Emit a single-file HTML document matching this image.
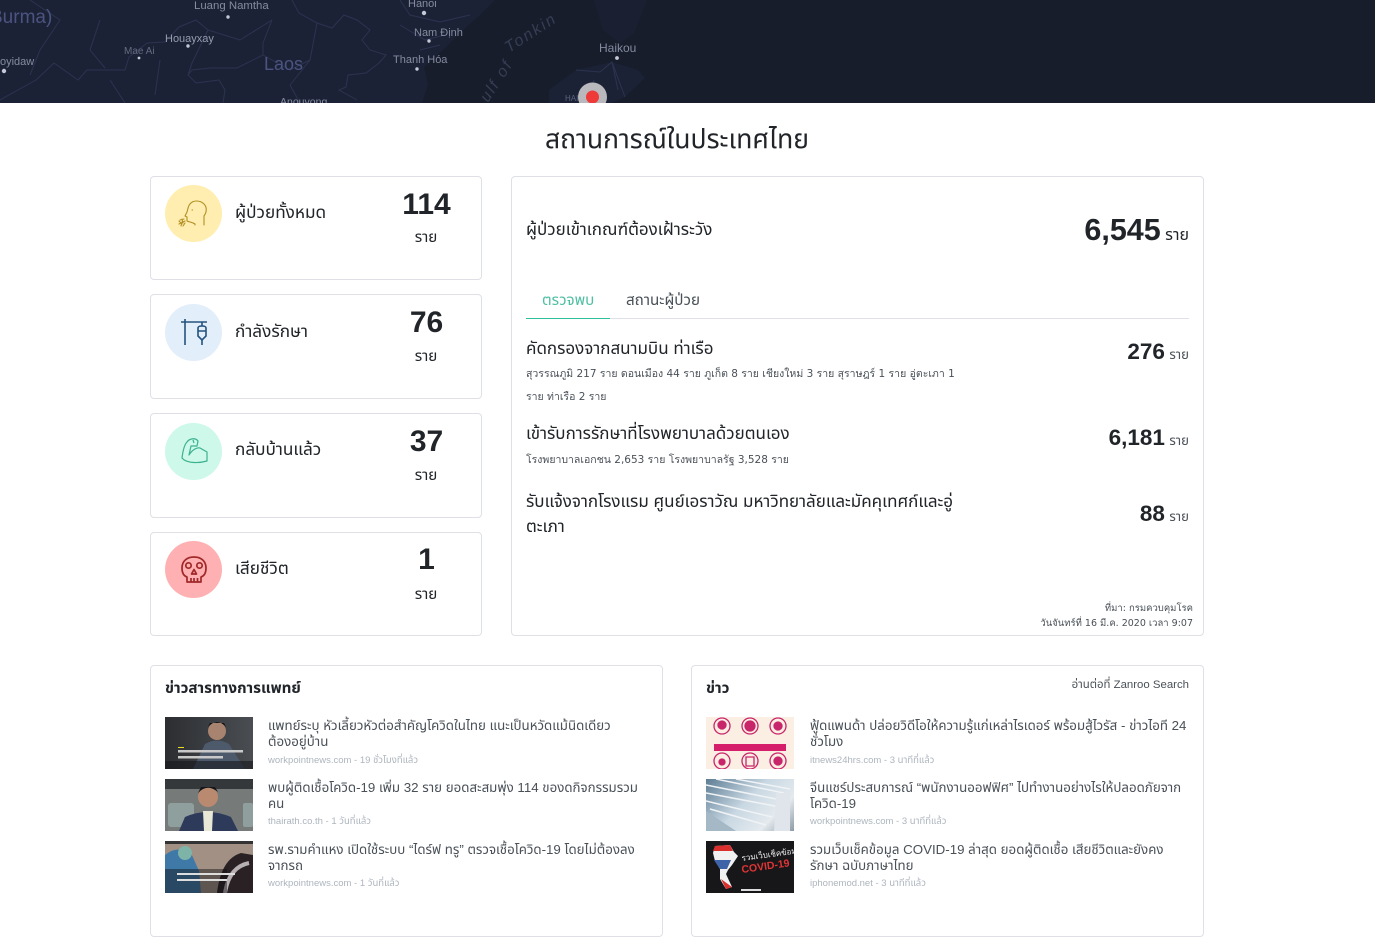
<!DOCTYPE html>
<html lang="th"><head><meta charset="utf-8"><title>สถานการณ์ในประเทศไทย</title>
<style>
*{box-sizing:border-box}
html,body{margin:0;padding:0;background:#fff}
body{width:1375px;height:945px;overflow:hidden;position:relative;font-family:"Liberation Sans","Noto Sans Thai","Noto Sans Thai UI","Kanit","Prompt","Sarabun",sans-serif;color:#212529}
.a{position:absolute;white-space:nowrap}
.card{position:absolute;border:1px solid #dfe0e5;border-radius:4px;background:#fff}
.circ{position:absolute;left:165px;width:57px;height:57px;border-radius:50%}
.lbl{font-size:17.200px;line-height:24px;color:#212529}
.num{font-weight:700;font-size:30px;line-height:36px;text-align:center;width:100px;left:376.500px;color:#212529}
.ray{font-size:15.200px;line-height:20px;text-align:center;width:100px;left:376px;color:#212529}
.hd{font-size:17px;line-height:24px;color:#212529}
.sm{font-family:"DejaVu Sans",sans-serif;font-size:10.500px;line-height:23px;color:#495057}
.big{font-weight:700;font-size:22.500px;line-height:28px;color:#212529}
.u{font-size:13.200px;line-height:14px;color:#495057}
.nt{font-size:13.300px;line-height:16px;color:#495057;white-space:nowrap}
.ns{font-size:9.500px;line-height:14px;color:#adb5bd}
.th{position:absolute;width:88px;height:52px;overflow:hidden}
.th svg{filter:blur(.35px);display:block}
</style></head><body>

<svg class="a" style="left:0;top:0" width="1375" height="103" viewBox="0 0 1375 103">
<rect width="1375" height="103" fill="#171d2b"/>
<path d="M0 0H495L480 15 460 33 445 48 424 67 428 85 422 103H0Z" fill="#1c2236"/>
<path d="M549 103V90L576 70 612 62 638 70 645 78 625 97 612 103Z" fill="#1c2236"/>
<path d="M594 0 603 30 620 43 634 33 647 0Z" fill="#1a2032"/>
<g fill="none" stroke="#2b3350" stroke-width="1">
<path d="M292 0 299 13 317 23 332 28 344 15 357 20 370 30 362 40 370 50 386 55 379 63 366 73 348 75 346 87 339 90 357 100"/>
<path d="M272 20 263 43 263 55 237 68 210 68 192 70 188 75 196 83 219 80 225 90 223 103"/>
<path d="M179 27 196 20 208 30 192 63 188 75"/>
<path d="M0 100 36 80 54 63 78 80 87 70 125 70 129 57 147 43 165 42 179 27"/>
<path d="M208 30 240 40 272 20M317 23 310 60 290 85 300 103M263 55 290 70 310 60"/>
<path d="M30 0 60 20 40 50 30 75M100 20 90 50 105 68M110 80 125 103M160 60 155 95"/>
<path d="M400 0 410 15 440 22 470 15M400 25 425 40 445 35M420 50 440 45"/>
<path d="M576 70 600 72 612 62 625 97M612 62 618 90M594 80 585 103"/>
</g>
<g font-family="Liberation Sans,sans-serif" font-size="11" fill="#858ba0">
<text x="194" y="9" font-size="11.400">Luang Namtha</text>
<text x="165" y="42" fill="#979db0">Houayxay</text>
<text x="124" y="54" font-size="10" fill="#646a80">Mae Ai</text>
<text x="0" y="65" font-size="11">oyidaw</text>
<text x="414" y="36">Nam Định</text>
<text x="393" y="63">Thanh Hóa</text>
<text x="408" y="7">Hanoi</text>
<text x="599" y="52" font-size="12">Haikou</text>
<text x="280" y="105" font-size="10.500">Anouvong</text>
<text x="264" y="70" font-size="18" fill="#4b5480">Laos</text>
<text x="-10" y="23" font-size="19" fill="#4b5480">Burma)</text>
<text x="565" y="101" font-size="8" fill="#5a617c">HAI</text>
<text transform="translate(488 103) rotate(-57)" font-size="16" letter-spacing="2" fill="#363d54" font-style="italic">ulf of</text>
<text transform="translate(509 53) rotate(-33)" font-size="16" letter-spacing="2" fill="#363d54" font-style="italic">Tonkin</text>
</g>
<g fill="#c5c9d6"><circle cx="139" cy="58" r="1.400"/><circle cx="188" cy="46" r="1.700"/><circle cx="228" cy="17" r="1.700"/><circle cx="424" cy="13" r="2.200"/><circle cx="429" cy="41" r="1.700"/><circle cx="417" cy="69" r="1.700"/><circle cx="617" cy="58" r="1.900"/><circle cx="4" cy="71" r="2.200"/></g>
<circle cx="592.500" cy="97" r="14.500" fill="#b9b9bd"/>
<circle cx="592.500" cy="97" r="6.500" fill="#ef3a3a"/>
</svg>

<div class="a" style="left:0;width:1354px;top:121px;text-align:center;font-size:26.500px;line-height:36px;color:#212529">สถานการณ์ในประเทศไทย</div>

<div class="card" style="left:150px;top:176px;width:332px;height:104px"></div>
<div class="card" style="left:150px;top:294px;width:332px;height:105px"></div>
<div class="card" style="left:150px;top:413px;width:332px;height:105px"></div>
<div class="card" style="left:150px;top:532px;width:332px;height:104px"></div>

<div class="circ" style="top:185px;background:#ffeeb0"></div>
<div class="circ" style="top:304px;background:#e3eefb"></div>
<div class="circ" style="top:423px;background:#cdf8ea"></div>
<div class="circ" style="top:541px;background:#ffb0b2"></div>

<svg class="a" style="left:178px;top:199px" width="30" height="30" viewBox="0 0 30 30" fill="none" stroke="#b38f24" stroke-width="1.100" stroke-linecap="round" stroke-linejoin="round">
<path d="M26 26V17C29 13 29 8 26 5 22 1 15 1 12 5 10 7 10 10 9 13L7 17 9 18V22C11 23 14 23 17 25V26"/><path d="M14 11h.6"/><path d="M6 20 2 21M7 22 1 25M4 23 3 27M7 24 5 27M1 22l3 3M4 20l1 4"/>
</svg>
<svg class="a" style="left:179px;top:317px" width="30" height="30" viewBox="0 0 30 30" fill="none" stroke="#24537f" stroke-width="1.600">
<path d="M2 5H28M6 2V28M23 5V9"/><path d="M19 11Q19 9 23 9T27 11V19L23 23 19 19Z M19 14H27"/><path d="M23 23V28"/>
</svg>
<svg class="a" style="left:180px;top:437px" width="29" height="29" viewBox="0 0 29 29" fill="none" stroke="#3bb18e" stroke-width="1.200" stroke-linejoin="round">
<path d="M2 21C3 13 5 7 7 5 9 2 15 0 18 4L17 9H11L9 18C12 13 17 10 20 11L27 15V24C20 26 7 27 2 21Z"/><path d="M13 3 14 6"/>
</svg>
<svg class="a" style="left:180px;top:555px" width="28" height="29" viewBox="0 0 28 29" fill="none" stroke="#a02828" stroke-width="1.700" stroke-linejoin="round">
<path d="M7 27V22C4 21 2 18 2 13 2 6 7 2 14 2S26 6 26 13C26 18 24 21 21 22V27Z"/><circle cx="8.500" cy="10.500" r="2.700"/><circle cx="19.500" cy="10.500" r="2.700"/><path d="M14 14.500 16.500 19H11.500Z"/><path d="M11 23V27M14 23V27M17.500 23V27"/>
</svg>

<div class="a lbl" style="left:235px;top:200px">ผู้ป่วยทั้งหมด</div>
<div class="a lbl" style="left:235px;top:319px">กำลังรักษา</div>
<div class="a lbl" style="left:235px;top:437px">กลับบ้านแล้ว</div>
<div class="a lbl" style="left:235px;top:556px">เสียชีวิต</div>

<div class="a num" style="top:187px">114</div><div class="a ray" style="top:228px">ราย</div>
<div class="a num" style="top:305px">76</div><div class="a ray" style="top:347px">ราย</div>
<div class="a num" style="top:424px">37</div><div class="a ray" style="top:466px">ราย</div>
<div class="a num" style="top:542px">1</div><div class="a ray" style="top:585px">ราย</div>

<div class="card" style="left:511px;top:176px;width:693px;height:460px"></div>
<div class="a hd" style="left:526px;top:218px">ผู้ป่วยเข้าเกณฑ์ต้องเฝ้าระวัง</div>
<div class="a" style="right:186px;top:212px;font-size:16px;line-height:36px;color:#212529"><span style="font-weight:700;font-size:30.500px">6,545</span> ราย</div>

<div class="a" style="left:526px;top:318px;width:663px;height:1px;background:#dfe0e8"></div>
<div class="a" style="left:526px;top:318px;width:84px;height:1px;background:#2ebf9b"></div>
<div class="a" style="left:542px;top:291px;font-size:15.200px;line-height:20px;color:#4fbfa3">ตรวจพบ</div>
<div class="a" style="left:626px;top:291px;font-size:15.200px;line-height:20px;color:#495057">สถานะผู้ป่วย</div>

<div class="a hd" style="left:526px;top:337px">คัดกรองจากสนามบิน ท่าเรือ</div>
<div class="a sm" style="left:526px;top:363px">สุวรรณภูมิ 217 ราย ดอนเมือง 44 ราย ภูเก็ต 8 ราย เชียงใหม่ 3 ราย สุราษฎร์ 1 ราย อู่ตะเภา 1</div>
<div class="a sm" style="left:526px;top:386px">ราย ท่าเรือ 2 ราย</div>
<div class="a" style="right:186px;top:338px;line-height:28px"><span class="big">276</span> <span class="u">ราย</span></div>

<div class="a hd" style="left:526px;top:422px">เข้ารับการรักษาที่โรงพยาบาลด้วยตนเอง</div>
<div class="a sm" style="left:526px;top:449px">โรงพยาบาลเอกชน 2,653 ราย โรงพยาบาลรัฐ 3,528 ราย</div>
<div class="a" style="right:186px;top:424px;line-height:28px"><span class="big">6,181</span> <span class="u">ราย</span></div>

<div class="a hd" style="left:526px;top:490px">รับแจ้งจากโรงแรม ศูนย์เอราวัณ มหาวิทยาลัยและมัคคุเทศก์และอู่</div>
<div class="a hd" style="left:526px;top:515px">ตะเภา</div>
<div class="a" style="right:186px;top:500px;line-height:28px"><span class="big">88</span> <span class="u">ราย</span></div>

<div class="a" style="right:182px;top:601px;font-family:'DejaVu Sans',sans-serif;font-size:9.500px;line-height:15px;color:#495057">ที่มา: กรมควบคุมโรค</div>
<div class="a" style="right:182px;top:616px;font-family:'DejaVu Sans',sans-serif;font-size:9.500px;line-height:16px;color:#495057">วันจันทร์ที่ 16 มี.ค. 2020 เวลา 9:07</div>

<div class="card" style="left:150px;top:665px;width:513px;height:272px"></div>
<div class="card" style="left:691px;top:665px;width:513px;height:272px"></div>
<div class="a" style="left:165px;top:679px;font-size:15.200px;line-height:20px;font-weight:700">ข่าวสารทางการแพทย์</div>
<div class="a" style="left:706px;top:679px;font-size:15.200px;line-height:20px;font-weight:700">ข่าว</div>
<div class="a" style="right:186px;top:678px;font-size:11.400px;line-height:14px;color:#495057">อ่านต่อที่ Zanroo Search</div>

<!-- left thumbs -->
<div class="th" style="left:165px;top:717px;background:linear-gradient(90deg,#2b2d31,#3e4145 60%,#4a4d51)">
<svg width="88" height="52"><circle cx="52" cy="14" r="9" fill="#a88470"/><path d="M43 10Q52 0 61 10L59 6 45 6Z" fill="#111"/><path d="M28 52 40 27Q52 20 64 27L80 52Z" fill="#4d5a6c"/><rect x="0" y="44" width="88" height="8" fill="#17181b" opacity=".6"/><rect x="13" y="33" width="65" height="2.500" fill="#c9c9c9"/><rect x="13" y="39" width="45" height="2.500" fill="#c9c9c9"/><rect x="13" y="30" width="6" height="1" fill="#e8e020"/></svg></div>
<div class="th" style="left:165px;top:779px;background:#767a78">
<svg width="88" height="52"><rect width="88" height="10" fill="#35383a"/><rect x="3" y="24" width="26" height="24" rx="3" fill="#8e9f9e"/><rect x="78" y="24" width="10" height="24" rx="2" fill="#8e9f9e"/><circle cx="43" cy="18" r="10" fill="#b98a70"/><path d="M33 14Q42 4 53 13L50 8 36 8Z" fill="#15161a"/><path d="M14 52 20 38Q42 28 66 38L73 52Z" fill="#2e3a59"/><path d="M38 32 48 32 47 52H39Z" fill="#e9e7d5"/></svg></div>
<div class="th" style="left:165px;top:841px;background:#6e6660">
<svg width="88" height="52"><rect width="88" height="52" fill="#a19083"/><path d="M0 52V14Q12 4 26 12L34 30 36 52Z" fill="#3e79a8"/><circle cx="20" cy="12" r="7" fill="#7eb4a8"/><path d="M52 52Q56 18 76 12L88 14V52Z" fill="#2a2124"/><path d="M60 52Q64 26 84 22" stroke="#b7b0b2" stroke-width="4" fill="none"/><rect x="0" y="0" width="88" height="3" fill="#333"/><rect x="0" y="28" width="62" height="24" fill="#0d0d12" opacity=".45"/><rect x="12" y="32" width="58" height="2" fill="#ddd"/><rect x="12" y="38" width="50" height="2" fill="#ddd"/></svg></div>

<!-- right thumbs -->
<div class="th" style="left:706px;top:717px;background:#fbeee2">
<svg width="88" height="52" fill="none" stroke="#c8256b" stroke-width="1.300"><circle cx="16" cy="9" r="8"/><circle cx="44" cy="9" r="8"/><circle cx="72" cy="9" r="8"/><circle cx="16" cy="44" r="8"/><circle cx="44" cy="44" r="8"/><circle cx="72" cy="44" r="8"/><rect x="8" y="27" width="72" height="7" fill="#d51f6a" stroke="none"/><circle cx="16" cy="8" r="4" fill="#c8256b"/><circle cx="44" cy="9" r="5" fill="#c8256b"/><circle cx="72" cy="9" r="4" fill="#c8256b"/><circle cx="16" cy="45" r="3" fill="#c8256b"/><circle cx="72" cy="44" r="4" fill="#c8256b"/><path d="M40 40h8v9h-8z"/></svg></div>
<div class="th" style="left:706px;top:779px;background:linear-gradient(135deg,#5d7d94,#c9d8e3 45%,#e4eaee 75%,#8d9aa6)">
<svg width="88" height="52" stroke="#f0f3f5" fill="none" stroke-width="1.500"><path d="M0 6 70 20M0 14 74 28M0 22 66 38M4 30 60 46M10 0 78 14M30 0 84 10"/><path d="M70 14H84V52H68Z" fill="#dfe5ea" stroke="none"/><path d="M0 32 30 52H0Z" fill="#a5b8c6" stroke="none"/></svg></div>
<div class="th" style="left:706px;top:841px;background:#17171a">
<svg width="88" height="52"><path d="M9 5 24 4 28 11 32 15 26 24 22 29 20 33 26 46 20 48 14 38 14 28 9 20 7 12Z" fill="#f1f1f1"/><path d="M9 5 24 4 27 10H7Z" fill="#d9302e"/><path d="M8 19H25L21 28H14Z" fill="#3e63a8"/><path d="M15 38 26 46 20 48Z" fill="#d9302e"/><text x="36" y="20" font-size="8" fill="#eee" font-family="Liberation Sans,sans-serif" transform="rotate(-8 36 20)">รวมเว็บเช็คข้อมูล</text><text x="36" y="32" font-size="10.500" font-weight="700" fill="#e03434" font-family="Liberation Sans,sans-serif" transform="rotate(-8 36 32)">COVID-19</text><rect x="35" y="48" width="20" height="2" fill="#ddd"/></svg></div>

<!-- left news -->
<div class="a nt" style="left:268px;top:718px">แพทย์ระบุ หัวเลี้ยวหัวต่อสำคัญโควิดในไทย แนะเป็นหวัดแม้นิดเดียว<br>ต้องอยู่บ้าน</div>
<div class="a ns" style="left:268px;top:754px">workpointnews.com - 19 ชั่วโมงที่แล้ว</div>
<div class="a nt" style="left:268px;top:780px">พบผู้ติดเชื้อโควิด-19 เพิ่ม 32 ราย ยอดสะสมพุ่ง 114 ของดกิจกรรมรวม<br>คน</div>
<div class="a ns" style="left:268px;top:815px">thairath.co.th - 1 วันที่แล้ว</div>
<div class="a nt" style="left:268px;top:842px">รพ.รามคำแหง เปิดใช้ระบบ “ไดร์ฟ ทรู” ตรวจเชื้อโควิด-19 โดยไม่ต้องลง<br>จากรถ</div>
<div class="a ns" style="left:268px;top:877px">workpointnews.com - 1 วันที่แล้ว</div>

<!-- right news -->
<div class="a nt" style="left:810px;top:718px">ฟู้ดแพนด้า ปล่อยวิดีโอให้ความรู้แก่เหล่าไรเดอร์ พร้อมสู้ไวรัส - ข่าวไอที 24<br>ชั่วโมง</div>
<div class="a ns" style="left:810px;top:754px">itnews24hrs.com - 3 นาทีที่แล้ว</div>
<div class="a nt" style="left:810px;top:780px">จีนแชร์ประสบการณ์ “พนักงานออฟฟิศ” ไปทำงานอย่างไรให้ปลอดภัยจาก<br>โควิด-19</div>
<div class="a ns" style="left:810px;top:815px">workpointnews.com - 3 นาทีที่แล้ว</div>
<div class="a nt" style="left:810px;top:842px">รวมเว็บเช็คข้อมูล COVID-19 ล่าสุด ยอดผู้ติดเชื้อ เสียชีวิตและยังคง<br>รักษา ฉบับภาษาไทย</div>
<div class="a ns" style="left:810px;top:877px">iphonemod.net - 3 นาทีที่แล้ว</div>

</body></html>
